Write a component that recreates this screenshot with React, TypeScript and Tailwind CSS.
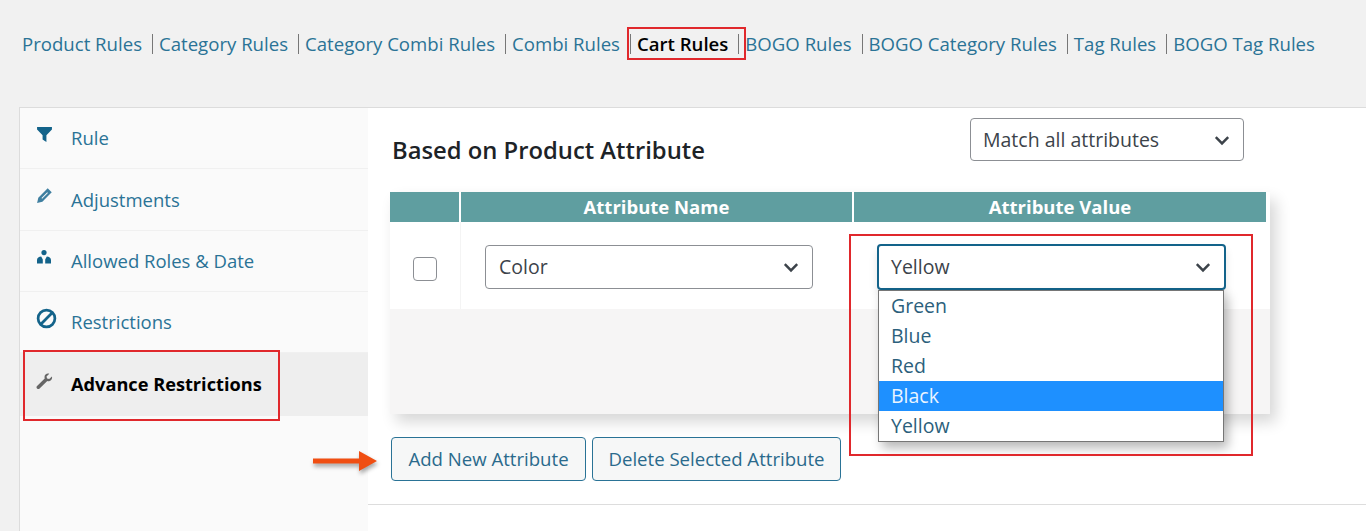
// Cart rules admin screen: rule type links, side tabs and the attribute table.
import { ReactNode } from "react";

const font = { fontFamily: '"Open Sans", "Noto Sans", sans-serif' };

const links = [
  "Product Rules",
  "Category Rules",
  "Category Combi Rules",
  "Combi Rules",
  "Cart Rules",
  "BOGO Rules",
  "BOGO Category Rules",
  "Tag Rules",
  "BOGO Tag Rules",
];

function FilterIcon() {
  return (
    <svg viewBox="0 0 16 16" className="h-[17px] w-[17px] fill-[#13638a]">
      <path d="M1 1h14v2.2L9.800 8.600V15L6.200 12.600V8.600L1 3.200z" />
    </svg>
  );
}

function PencilIcon() {
  return (
    <svg viewBox="0 0 16 16" className="h-[17px] w-[17px] fill-[#3f7fa0]">
      <path d="M11 1.200l3.800 3.800L6 13.800l-5 1.200L2.200 10z" />
      <path d="M10.600 5l.6.6-5.400 5.400-.6-.6z" fill="#fafafa" />
    </svg>
  );
}

function RolesIcon() {
  return (
    <svg viewBox="0 0 16 16" className="h-[16px] w-[16px] fill-[#13638a]">
      <circle cx="8" cy="3.600" r="2.600" />
      <path d="M1 14.500v-3.600C1 8.600 3 7.400 5.200 7.400l1.600 3.200v3.900zM15 14.500v-3.600c0-2.300-2-3.500-4.200-3.500l-1.600 3.200v3.900z" />
    </svg>
  );
}

function BlockedIcon() {
  return (
    <svg viewBox="0 0 20 20" className="h-[21px] w-[21px] fill-none stroke-[#13638a] stroke-[2.600]">
      <circle cx="10" cy="10" r="8" />
      <path d="M4.800 15.200L15.200 4.800" />
    </svg>
  );
}

function WrenchIcon() {
  return (
    <svg viewBox="0 0 16 16" className="h-[17px] w-[17px] fill-[#666]">
      <path d="M15 3.200l-2.600 2.500-2-.5-.5-2L12.500.8C10.400 0 8 1.400 8 3.800c0 .5.1.9.2 1.300L1 12.200c-.7.7-.7 1.700 0 2.400.7.7 1.700.7 2.400 0l7.200-7.100c2.600.8 5.200-1.500 4.400-4.300z" />
    </svg>
  );
}

const tabs: { label: string; icon: ReactNode; active?: boolean }[] = [
  { label: "Rule", icon: <FilterIcon /> },
  { label: "Adjustments", icon: <PencilIcon /> },
  { label: "Allowed Roles & Date", icon: <RolesIcon /> },
  { label: "Restrictions", icon: <BlockedIcon /> },
  { label: "Advance Restrictions", icon: <WrenchIcon />, active: true },
];

function Chevron() {
  return (
    <svg viewBox="0 0 16 16" className="h-[18px] w-[18px] fill-none stroke-[#3c434a] stroke-[2.200]">
      <path d="M2.500 5.500L8 11l5.500-5.500" />
    </svg>
  );
}

function SelectBox({ value, className }: { value: string; className: string }) {
  return (
    <div className={`flex items-center justify-between rounded-[4px] bg-white pr-[12px] text-[19.500px] text-[#3c434a] ${className}`}>
      <span>{value}</span>
      <Chevron />
    </div>
  );
}

export default function App() {
  return (
    <div className="h-[531px] w-[1366px] overflow-hidden bg-[#f1f1f1]" style={font}>
      {/* rule type links */}
      <nav className="relative flex h-[107px] items-start pl-[22px] pt-[31px] text-[18.600px] leading-[26px] text-[#2a7396]">
        {links.map((link, i) => (
          <span key={link} className="flex items-center whitespace-nowrap">
            <span className={link === "Cart Rules" ? "font-semibold text-black" : ""}>{link}</span>
            {i < links.length - 1 && <span className="ml-[10px] mr-[6px] h-[20px] w-[1px] bg-[#777]" />}
          </span>
        ))}
        <div className="absolute left-[627px] top-[27px] h-[33px] w-[119px] border-2 border-[#e0282c]" />
      </nav>

      <div className="relative ml-[19px] flex h-[424px] border-l border-t border-[#dcdcdc]">
        {/* side tabs */}
        <aside className="w-[348px] shrink-0 bg-[#fafafa]">
          {tabs.map((tab) => (
            <div
              key={tab.label}
              className={`flex items-center pl-[16px] ${
                tab.active
                  ? "h-[63px] bg-[#eeeeee] text-[18.200px] font-bold text-black"
                  : "h-[61.250px] border-b border-[#f0f0f0] text-[18.500px] text-[#2a7396]"
              }`}
            >
              <span className="-mt-[7px] flex w-[35px] justify-start">{tab.icon}</span>
              {tab.label}
            </div>
          ))}
        </aside>

        {/* main panel */}
        <main className="relative flex-1 bg-white">
          <div className="relative flex h-[84px] items-start justify-between pl-[24px]">
            <h2 className="mt-[23px] text-[23.800px] font-semibold leading-[38px] text-[#1d2327]">
              Based on Product Attribute
            </h2>
            <SelectBox
              value="Match all attributes"
              className="mr-[122px] mt-[10px] h-[43px] w-[274px] border border-[#8c8f94] pl-[12px]"
            />
          </div>

          {/* attribute table */}
          <div className="ml-[22px] w-[880px] bg-[#f6f5f5] shadow-[6px_8px_14px_rgba(0,0,0,0.16)]">
            <div className="flex h-[30px] gap-[2px] bg-white pr-[4px] text-[18.500px] font-bold leading-[30px] text-white">
              <div className="w-[69px] bg-[#5f9ea0]" />
              <div className="w-[391px] bg-[#5f9ea0] text-center">Attribute Name</div>
              <div className="flex-1 bg-[#5f9ea0] text-center">Attribute Value</div>
            </div>
            <div className="flex h-[87px] bg-white">
              <div className="flex w-[71px] items-center justify-center border-r border-[#f4f4f4] pr-[1px] pt-[6px]">
                <div className="h-[24px] w-[24px] rounded-[4px] border border-[#8c8f94] bg-white" />
              </div>
              <div className="flex flex-1 items-start pl-[24px] pt-[23px]">
                <SelectBox value="Color" className="h-[44px] w-[328px] border border-[#8c8f94] pl-[13px]" />
                <SelectBox
                  value="Yellow"
                  className="-mt-[1px] ml-[64px] h-[46px] w-[349px] border-2 border-[#13638a] pl-[12px] shadow-[0_6px_8px_rgba(0,0,0,0.1)]"
                />
              </div>
            </div>
            <div className="h-[105px]" />
          </div>

          {/* action buttons */}
          <div className="ml-[23px] mt-[23px] flex gap-[6px] text-[18.600px] text-[#2a6a8c]">
            <button type="button" className="h-[44px] w-[195px] rounded-[4px] border border-[#2a7396] bg-[#f6f7f7]">
              Add New Attribute
            </button>
            <button type="button" className="h-[44px] w-[249px] rounded-[4px] border border-[#2a7396] bg-[#f6f7f7]">
              Delete Selected Attribute
            </button>
          </div>
          <div className="mt-[23px] h-[1px] bg-[#dddddd]" />

          {/* open dropdown */}
          <div className="absolute left-[510px] top-[182px] w-[346px] border border-[#767676] bg-white text-[19.500px] leading-[30px] text-[#2c5f7c] shadow-[4px_6px_10px_rgba(0,0,0,0.28)]">
            <div className="pl-[12px]">Green</div>
            <div className="pl-[12px]">Blue</div>
            <div className="pl-[12px]">Red</div>
            <div className="bg-[#1e90ff] pl-[12px] text-[#eaf4ff]">Black</div>
            <div className="pl-[12px]">Yellow</div>
          </div>
          <div className="absolute left-[481px] top-[126px] h-[222px] w-[404px] border-2 border-[#e0282c]" />
        </main>

        <div className="absolute left-[3px] top-[242px] h-[71px] w-[257px] border-2 border-[#e0282c]" />

        {/* pointer arrow */}
        <svg viewBox="0 0 66 24" className="absolute left-[293px] top-[341px] h-[24px] w-[66px] drop-shadow-[1px_3px_2px_rgba(0,0,0,0.35)]">
          <path d="M0 9.500h46V2l18 10-18 10v-7.500H0z" fill="#f04e12" />
        </svg>
      </div>
    </div>
  );
}
